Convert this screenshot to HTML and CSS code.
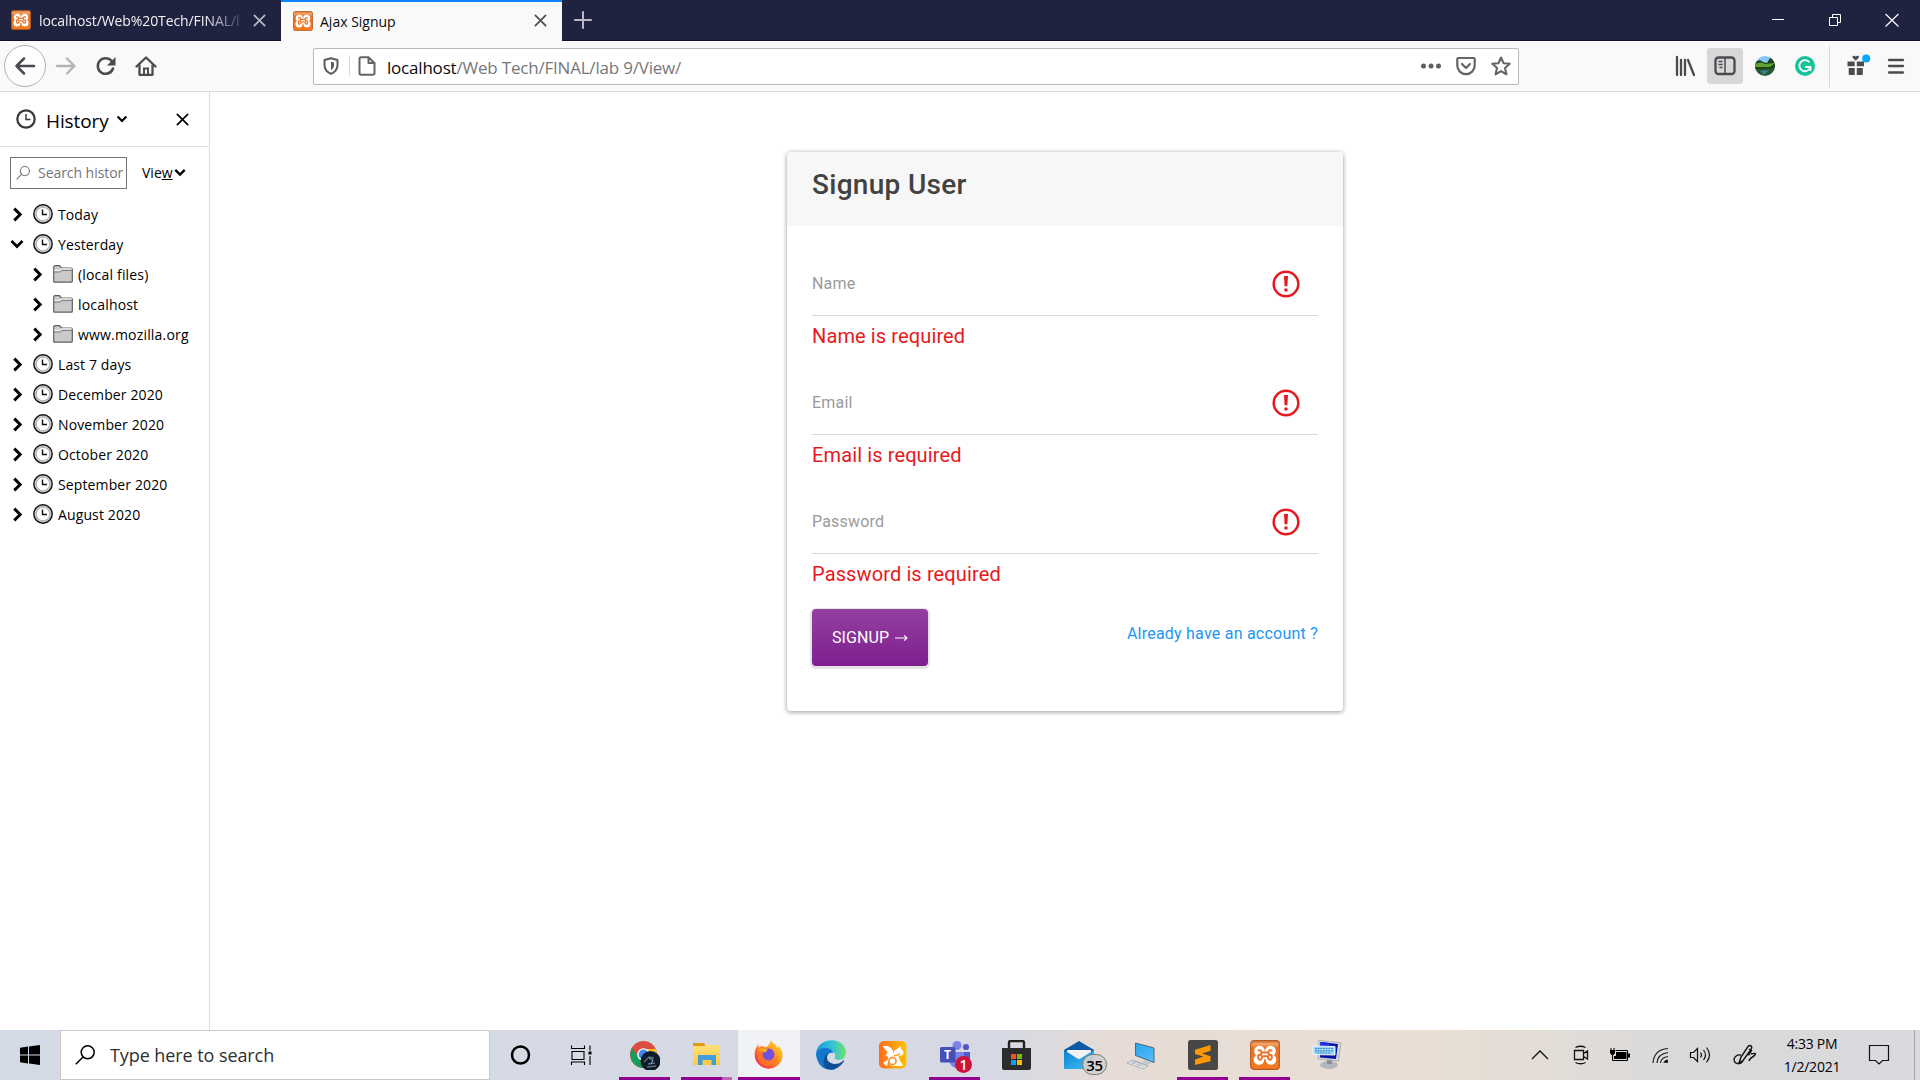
FILE: index.html
```html
<!DOCTYPE html>
<html lang="en">
<head>
<meta charset="utf-8">
<title>Ajax Signup</title>
<link rel="stylesheet" href="styles.css">
</head>
<body>
<svg class="defs" width="0" height="0" aria-hidden="true">
  <defs>
    <linearGradient id="g-orange" x1="0" y1="0" x2="0" y2="1"><stop offset="0" stop-color="#c9703a"/><stop offset=".12" stop-color="#f6a565"/><stop offset=".25" stop-color="#e9752a"/><stop offset="1" stop-color="#f47a20"/></linearGradient>
    <linearGradient id="g-edge" x1="0" y1="0" x2="1" y2="0"><stop offset="0" stop-color="#1a9be0"/><stop offset=".55" stop-color="#35c1d8"/><stop offset="1" stop-color="#6be36a"/></linearGradient>
    <linearGradient id="g-fire" x1="1" y1="0" x2="0" y2="1"><stop offset="0" stop-color="#ffe83a"/><stop offset=".4" stop-color="#ff9a1f"/><stop offset=".75" stop-color="#fb4a3c"/><stop offset="1" stop-color="#e3157c"/></linearGradient>
    <linearGradient id="g-uc" x1="0" y1="0" x2="1" y2="0"><stop offset="0" stop-color="#ff6a1a"/><stop offset="1" stop-color="#ffc400"/></linearGradient>
    <linearGradient id="g-folder" x1="0" y1="0" x2="0" y2="1"><stop offset="0" stop-color="#ffdf79"/><stop offset="1" stop-color="#fdc941"/></linearGradient>
    <linearGradient id="g-screen" x1="0" y1="0" x2="1" y2="1"><stop offset="0" stop-color="#29a4ee"/><stop offset="1" stop-color="#56bdfa"/></linearGradient>
    <linearGradient id="g-mail" x1="0" y1="0" x2="1" y2="1"><stop offset="0" stop-color="#0f7fd2"/><stop offset="1" stop-color="#3fc4f5"/></linearGradient>
  </defs>
  <symbol id="xampp" viewBox="0 0 30 30"><rect x=".7" y=".7" width="28.6" height="28.6" rx="3" fill="url(#g-orange)" stroke="#b65a20" stroke-width="1.2"/><g fill="#fff"><circle cx="9.500" cy="11" r="5.300"/><circle cx="20.500" cy="11" r="5.300"/><circle cx="9" cy="19.500" r="5.300"/><circle cx="21" cy="19.500" r="5.300"/><path d="M9 12h12v7H9z"/></g><g fill="none" stroke="#e9752a" stroke-width="2" stroke-linecap="round" stroke-linejoin="round"><path d="M8.500 10.500q3-1 3 2t-3 2.500M8.500 15q-1 4 1 4.700 2.500.3 2.500-3.500H18q0 3.800 2.500 3.500 2-.7 1-4.700M21.500 10.500q-3-1-3 2t3 2.500M13 12.500h4"/></g></symbol>
  <symbol id="x" viewBox="0 0 16 16"><path d="M2.500 2.500l11 11M13.500 2.500l-11 11" fill="none" stroke="currentColor" stroke-width="1.800" stroke-linecap="round"/></symbol>
  <symbol id="right" viewBox="0 0 10 14"><path d="M2 1.500 7.500 7 2 12.500" fill="none" stroke="currentColor" stroke-width="2.700"/></symbol>
  <symbol id="down" viewBox="0 0 14 10"><path d="M1.500 2 7 7.500 12.500 2" fill="none" stroke="currentColor" stroke-width="2.700"/></symbol>
  <symbol id="clock" viewBox="0 0 20 20"><circle cx="10" cy="10" r="9.200" fill="#c8c8c8" stroke="#111" stroke-width="1.400"/><circle cx="10" cy="10" r="6.700" fill="#fff" stroke="#a5a5a5" stroke-width=".8"/><path d="M9.500 5.500V10.500H14" fill="none" stroke="#111" stroke-width="1.400"/></symbol>
  <symbol id="folder" viewBox="0 0 20 18"><path d="M.7 16.300V2q0-1.300 1.300-1.300H6.500L8.500 3H18q1.300 0 1.300 1.300v12q0 .9-1 .9H1.700q-1 0-1-.9Z" fill="#cacaca" stroke="#606060" stroke-width="1.200"/><path d="M1.300 5.300h5.500L9 3.800h9.600" fill="none" stroke="#eee" stroke-width="1.200"/><path d="M1 7h6l2-1.500h10" fill="none" stroke="#777" stroke-width=".9"/></symbol>
  <symbol id="glass" viewBox="0 0 20 20"><circle cx="12.700" cy="7.300" r="6.500" fill="none" stroke="currentColor" stroke-width="1.500"/><path d="M8 12 .8 19.200" stroke="currentColor" stroke-width="1.500"/></symbol>
  <symbol id="warn" viewBox="0 0 28 28"><circle cx="14" cy="14" r="12.300" fill="none" stroke="#e61920" stroke-width="2.500"/><path d="M12 6h4l-.6 10.200h-2.800Z" fill="#e61920"/><circle cx="14" cy="20" r="1.800" fill="#e61920"/></symbol>
</svg>

<header class="tabs">
  <div class="tab tab-idle"><svg class="fav"><use href="#xampp"/></svg><span class="tab-title faded">localhost/Web%20Tech/FINAL/l</span><svg class="tab-x"><use href="#x"/></svg></div>
  <div class="tab tab-on"><svg class="fav"><use href="#xampp"/></svg><span class="tab-title">Ajax Signup</span><svg class="tab-x"><use href="#x"/></svg></div>
  <svg class="plus" viewBox="0 0 18 18"><path d="M9 1v16M1 9h16" stroke="#b9bac6" stroke-width="2" stroke-linecap="round"/></svg>
  <div class="window-buttons">
    <svg viewBox="0 0 57 40"><path d="M22 19.500h12" stroke="#fff" stroke-width="1"/></svg>
    <svg viewBox="0 0 57 40"><path d="M22.500 17.500h8v8h-8ZM25.500 17.500v-3h8v8h-3" fill="none" stroke="#fff"/></svg>
    <svg viewBox="0 0 57 40"><path d="m21.500 14 13 12.500M34.500 14l-13 12.500" stroke="#fff" stroke-width="1.200"/></svg>
  </div>
</header>

<nav class="toolbar">
  <div class="nav-buttons">
    <div class="back"><svg width="22" height="20" viewBox="0 0 22 20"><path d="M20 10H3M10 2.500 2.500 10 10 17.500" fill="none" stroke="#4a4a4f" stroke-width="2.500" stroke-linecap="round" stroke-linejoin="round"/></svg></div>
    <svg class="nav-ico" viewBox="0 0 22 20"><path d="M2 10h17M12 2.500 19.500 10 12 17.500" fill="none" stroke="#b4b4b6" stroke-width="2.300" stroke-linecap="round" stroke-linejoin="round"/></svg>
    <svg class="nav-ico" viewBox="0 0 22 20"><path d="M18 12.500A7.800 7.800 0 1 1 16.600 5" fill="none" stroke="#4a4a4f" stroke-width="2.500" stroke-linecap="round"/><path d="M20.500 1v8.500H12Z" fill="#4a4a4f"/></svg>
    <svg class="nav-ico" viewBox="0 0 22 20"><path d="M1.500 10.500 11 1.500l9.500 9M4.500 9.500v9.300h13V9.500" fill="none" stroke="#4a4a4f" stroke-width="2.300" stroke-linecap="round" stroke-linejoin="round"/><path d="M9 18.500v-6h4v6" fill="none" stroke="#4a4a4f" stroke-width="2"/></svg>
  </div>
  <div class="url">
    <svg class="shield" viewBox="0 0 16 18"><path d="M8 1.200 14.500 3v5q0 6-6.500 8.800Q1.500 14 1.500 8V3Z" fill="none" stroke="#5c5c60" stroke-width="2" stroke-linejoin="round"/><path d="M8 4.700 11 5.500v3q0 3-3 5Z" fill="#5c5c60"/></svg>
    <svg class="page-ico" viewBox="0 0 18 20"><path d="M3 1.200h7.500L16.500 7v10q0 1.800-1.800 1.800H3.300Q1.500 18.800 1.500 17V3q0-1.800 1.500-1.800ZM10.500 1.500V7h6" fill="none" stroke="#646468" stroke-width="2" stroke-linejoin="round"/></svg>
    <span class="address"><b>localhost</b>/Web Tech/FINAL/lab 9/View/</span>
    <svg class="url-ico" viewBox="0 0 20 20"><g fill="#5f5f63"><circle cx="2.500" cy="10" r="2.500"/><circle cx="10" cy="10" r="2.500"/><circle cx="17.500" cy="10" r="2.500"/></g></svg>
    <svg class="url-ico" viewBox="0 0 20 20"><path d="M2.500 2h15q1.200 0 1.200 1.200V9.500a8.700 8.700 0 0 1-17.400 0V3.200Q1.300 2 2.500 2ZM6 8l4 4 4-4" fill="none" stroke="#646468" stroke-width="2.200" stroke-linecap="round" stroke-linejoin="round"/></svg>
    <svg class="url-ico" viewBox="0 0 20 20"><path d="m10 1.500 2.500 5.700 6.200.6-4.700 4.200 1.400 6.300L10 15.200l-5.400 3.100L6 12 1.300 7.800l6.200-.6Z" fill="none" stroke="#646468" stroke-width="2.100" stroke-linejoin="round"/></svg>
  </div>
  <div class="tools">
    <svg class="tool" viewBox="0 0 36 36"><path d="M10 9v18M14 12v15M18 12v15M21 12l6 15" fill="none" stroke="#4a4a4f" stroke-width="2.300" stroke-linecap="round"/></svg>
    <svg class="tool pressed" viewBox="0 0 36 36"><rect x="8.500" y="9.500" width="19" height="16.500" rx="3" fill="none" stroke="#4a4a4f" stroke-width="2.300"/><path d="M18 10v16M11.500 13.500h4M11.500 16.500h4M12.500 19.500h3" stroke="#4a4a4f" stroke-width="1.500"/></svg>
    <svg class="tool avatar" viewBox="0 0 36 36"><clipPath id="av"><circle cx="18" cy="18" r="10"/></clipPath><g clip-path="url(#av)"><path fill="#82c8f5" d="M8 8h20v10H8z"/><path fill="#245b2b" d="M8 16h20v12H8z"/><path fill="#1e4316" d="M8 15q4-5 8-1l4 1 3-5 6 1v8l-8 2H8z"/><path fill="#62a02e" d="M8 16q6-3 10 0l10-1-5 4H8z"/><path fill="#427a9e" d="m13 23 9-1-5 5z"/></g></svg>
    <svg class="tool" viewBox="0 0 36 36"><circle cx="18" cy="18" r="10" fill="#15c39a"/><path d="M22.500 14.300A5.600 5.600 0 1 0 23.300 19.500M18 19h5.500v4" fill="none" stroke="#fff" stroke-width="1.800"/></svg>
    <i class="tool-sep"></i>
    <svg class="tool gift" viewBox="0 0 36 36"><path d="M9.500 13.500h7.200v4.800H9.500zM18.800 13.500H26v4.800h-7.200zM10.700 20h6v7h-5q-1 0-1-1zM18.800 20h6v6q0 1-1 1h-5z" fill="#4a4a4f"/><path d="m17.700 12.800-3-3q-.8-1.500.7-2 1.300-.3 2.300 1 1-1.300 2.300-1 1.500.5.700 2Z" fill="#4a4a4f"/><circle cx="28.200" cy="10.500" r="4" fill="#00a9ff"/></svg>
    <svg class="tool" viewBox="0 0 36 36"><path d="M11 12h14M11 18h14M11 24.500h14" stroke="#4a4a4f" stroke-width="2.300" stroke-linecap="round"/></svg>
  </div>
</nav>

<main class="window">
  <aside class="sidebar">
    <div class="side-head">
      <svg width="20" height="20" viewBox="0 0 20 20"><circle cx="10" cy="10" r="8.700" fill="none" stroke="#38383d" stroke-width="2.200"/><path d="M10 5v5.500h4.500" fill="none" stroke="#38383d" stroke-width="1.400"/></svg>
      <span class="side-title">History</span>
      <svg class="side-arrow" width="12" height="8"><use href="#down"/></svg>
      <svg class="side-close" width="15" height="15"><use href="#x"/></svg>
    </div>
    <div class="side-search">
      <div class="field"><svg width="14" height="14"><use href="#glass"/></svg><span>Search histor</span></div>
      <span class="view">Vie<u>w</u></span><svg width="12" height="9"><use href="#down"/></svg>
    </div>
    <ul class="tree">
      <li><svg class="chev"><use href="#right"/></svg><svg class="clk"><use href="#clock"/></svg>Today</li>
      <li><svg class="chev open"><use href="#down"/></svg><svg class="clk"><use href="#clock"/></svg>Yesterday</li>
      <li class="sub"><svg class="chev"><use href="#right"/></svg><svg class="fld"><use href="#folder"/></svg>(local files)</li>
      <li class="sub"><svg class="chev"><use href="#right"/></svg><svg class="fld"><use href="#folder"/></svg>localhost</li>
      <li class="sub"><svg class="chev"><use href="#right"/></svg><svg class="fld"><use href="#folder"/></svg>www.mozilla.org</li>
      <li><svg class="chev"><use href="#right"/></svg><svg class="clk"><use href="#clock"/></svg>Last 7 days</li>
      <li><svg class="chev"><use href="#right"/></svg><svg class="clk"><use href="#clock"/></svg>December 2020</li>
      <li><svg class="chev"><use href="#right"/></svg><svg class="clk"><use href="#clock"/></svg>November 2020</li>
      <li><svg class="chev"><use href="#right"/></svg><svg class="clk"><use href="#clock"/></svg>October 2020</li>
      <li><svg class="chev"><use href="#right"/></svg><svg class="clk"><use href="#clock"/></svg>September 2020</li>
      <li><svg class="chev"><use href="#right"/></svg><svg class="clk"><use href="#clock"/></svg>August 2020</li>
    </ul>
  </aside>

  <section class="page">
    <form class="card">
      <h1 class="card-head">Signup User</h1>
      <div class="card-body">
        <div class="row"><label>Name</label><svg><use href="#warn"/></svg></div>
        <p class="error">Name is required</p>
        <div class="row"><label>Email</label><svg><use href="#warn"/></svg></div>
        <p class="error">Email is required</p>
        <div class="row"><label>Password</label><svg><use href="#warn"/></svg></div>
        <p class="error">Password is required</p>
        <div class="actions">
          <button type="button" class="signup"><span>SIGNUP</span><svg width="13" height="8" viewBox="0 0 13 8"><path d="M0 4h12M9 1.300 12 4 9 6.700" fill="none" stroke="#fff" stroke-width="1.100"/></svg></button>
          <a class="login">Already have an account ?</a>
        </div>
      </div>
    </form>
  </section>
</main>

<footer class="taskbar">
  <div class="start"><svg width="20" height="20" viewBox="0 0 20 20"><path d="M0 2.700 8 1.600V9.500H0ZM9 1.400 20 0V9.500H9ZM0 10.500h8v8L0 17.300ZM9 10.500h11V20L9 18.600Z"/></svg></div>
  <div class="task-search"><svg width="20" height="20"><use href="#glass"/></svg><span>Type here to search</span></div>
  <div class="apps">
    <div class="app"><svg viewBox="0 0 30 30"><circle cx="14.500" cy="15" r="8.500" fill="none" stroke="#000" stroke-width="2.500"/></svg></div>
    <div class="app"><svg viewBox="0 0 30 30"><path d="M3.500 5.500v3h13v-3M4 11.500h12v8H4ZM3.500 25v-3h13v3M22 5.500v5M22 16v9" fill="none" stroke="#000" stroke-width="1.100"/><path d="M20.500 11.500h3v3h-3z"/></svg></div>
    <div class="app running"><svg viewBox="0 0 30 30"><circle cx="13.500" cy="14.500" r="13.500" fill="#dc4e41"/><path d="M2 8 10 19l3 9A13.500 13.500 0 0 1 2 8Z" fill="#14a05c"/><path d="M14 9h12q2 7-2 13l-10 2Z" fill="#f9bf2c"/><circle cx="13.500" cy="14.500" r="6.300" fill="#fff"/><circle cx="13.500" cy="14.500" r="4.900" fill="#4186f3"/><circle cx="20.500" cy="21" r="10" fill="#0d1c2b"/><path d="m14 22 5-5 5 1M18 24l7-1M17 27l9-1" fill="none" stroke="#5f7080" stroke-width="1.300"/><path d="m19 18 4 2-2 4" fill="none" stroke="#a3b0ba" stroke-width="1"/></svg></div>
    <div class="app running stacked"><svg viewBox="0 0 30 30"><path d="M1 3h11l2 3H1z" fill="#dd9c0f"/><path d="M1 6h11l2-1h14v20H1z" fill="url(#g-folder)"/><path d="M6 15h18v10h-4.500v-5h-9v5H6z" fill="#3f9dde"/></svg></div>
    <div class="app running active"><svg viewBox="0 0 30 30"><path d="M17 0q1 3 5 5l1 3 2-2q4 5 3.500 11A14 14 0 0 1 .7 15Q.5 9 4.500 4v4l3-2q3 2 5 1l3-3Z" fill="url(#g-fire)"/><path d="M3 9q5-5 9-1l-4 3 2 4q3 7 10 4l4-3q-1 9-10 10Q2 26 3 9Z" fill="#ff7a22" opacity=".8"/><circle cx="14.500" cy="14.500" r="6" fill="#7550dc"/><path d="M4 10q4-3 7-1l3 .5-3 3-3-1Z" fill="#ffac21"/></svg></div>
    <div class="app"><svg viewBox="0 0 30 30"><path d="M0 14C1-4 29-4 30 12q0 7-7 8-5-.5-4-3 1-4-3-6-8-3-16 3Z" fill="url(#g-edge)"/><path d="M0 15q0-6 8-7 8 0 9.500 5-6-1-6.500 5 0 6 8 11.400Q3 32 0 15Z" fill="#1576cf"/><path d="M12 12q-4 10 6 12 6 0 9.500-3.500 1-.3.500 1-8 11-18 7Q4 22 12 12Z" fill="#104f91"/></svg></div>
    <div class="app"><svg viewBox="0 0 30 30"><rect x="1" y="1" width="27.500" height="27.500" rx="5" fill="url(#g-uc)"/><path d="M4.500 6q7-1 10 4 2 5-1 8-5 5-4 8-4-1-4-4 4-1 5-4-1-2-3-3 2-1 2-3-3-3-5-6Z" fill="#fff"/><path d="M15 15q0-5 4-6l4-3v3q3 2 2.500 5-2 2-5 2l2 6 2 2v2H14l-3-2q-1-6 4-9Z" fill="#fff"/><circle cx="14.500" cy="21" r="3.600" fill="none" stroke="#ff861a" stroke-width="1.500"/><path d="M16 15.500q4 .5 6-2" fill="none" stroke="#ff9b10" stroke-width="1.300"/></svg></div>
    <div class="app running teams"><svg viewBox="0 0 30 30"><circle cx="17" cy="5.500" r="4.500" fill="#7b83eb"/><circle cx="26" cy="7" r="3.100" fill="#5059c9"/><path d="M21 12h9v9q-3 4-9 2Z" fill="#5059c9"/><path d="M11 12h13v10q-2 6-8 6-5-1-7-7Z" fill="#7b83eb"/><rect x="0" y="7" width="15.500" height="15.500" rx="1.500" fill="#464eb8"/></svg><span class="team-letter">T</span><span class="badge">1</span></div>
    <div class="app"><svg viewBox="0 0 30 30"><path d="M7 9V2.500Q7 1 8.500 1h12Q22 1 22 2.500V9" fill="none" stroke="#222" stroke-width="2.400"/><path d="M0 8h29v20q0 2-2 2H2q-2 0-2-2Z" fill="#2c2c2c"/><path fill="#f25022" d="M9 14h5v5H9z"/><path fill="#7fba00" d="M15 14h5v5h-5z"/><path fill="#00a4ef" d="M9 20h5v5H9z"/><path fill="#ffb900" d="M15 20h5v5h-5z"/></svg></div>
    <div class="app mail"><svg viewBox="0 0 30 30"><path d="M0 10 15 1l15 9v3H0Z" fill="#0d59a4"/><path d="M3 10h24v8H3z" fill="#f2f2f2"/><path d="M0 10 15 19.500 30 10v19H0Z" fill="url(#g-mail)"/></svg><span class="badge">35</span></div>
    <div class="app"><svg viewBox="0 0 30 30"><path d="M9.500 3 28 8v14.500L9.500 15.500Z" fill="url(#g-screen)" stroke="#456a82"/><path d="m19 20 7 3-5 2-6-3Z" fill="#c2cbd0"/><path d="m1 23 5-3 16 5.500-5 3.500Z" fill="#e9edf0" stroke="#8e9ba5" stroke-width=".7"/><path d="m4 22 14 5M6 21l14 4.700M5 24.500l5-3.300M11 26.500l4-2.700" stroke="#99a5ad" stroke-width=".6"/></svg></div>
    <div class="app running"><svg viewBox="0 0 30 30"><rect width="30" height="30" rx="2.500" fill="#474747"/><path d="M22.500 5v5.700L14 13.500l8.500 2.700v5L7 25v-5.500l8.500-3L7 14V9.800Z" fill="#ff9800"/></svg></div>
    <div class="app running"><svg viewBox="0 0 30 30"><use href="#xampp"/></svg></div>
    <div class="app"><svg viewBox="0 0 30 30"><ellipse cx="17" cy="25" rx="9" ry="4" fill="#b4b8bc"/><path d="M15 18h5v6h-5z" fill="#8a8f94"/><path d="m7 .5 22 2.200L26.500 21 6 19Z" fill="#d5d9dd" stroke="#8c9298" stroke-width=".6"/><path d="m8.500 2 17.500 2-2 15L8 17.500Z" fill="#0a12a8"/><path d="m8.500 2 9 1v3H8Z" fill="#1b2fe0"/><path d="M1 6l22 .5V15L1 14.500Z" fill="#9ed5f7" stroke="#eaf6fd"/><path d="M3 8.500h18M3 10.800h18M5 13h14" stroke="#2e82c4" stroke-width="1.200" stroke-dasharray="1.700 1"/></svg></div>
  </div>
  <div class="tray">
    <svg viewBox="0 0 40 30"><path d="m12 19 8-8 8 8" fill="none" stroke="#111" stroke-width="1.300"/></svg>
    <svg viewBox="0 0 40 30"><path d="M14.500 10.500h9v9h-9ZM23.500 13.500l4-2.500v8l-4-2.500M15.500 7.500q5-2.500 10 0M15.500 22.500q5 2.500 10 0" fill="none" stroke="#111" stroke-width="1.300"/></svg>
    <svg viewBox="0 0 40 30"><path d="M15.500 10.500h12v10h-12" fill="none" stroke="#000"/><path d="M16 12h10.500v7H14v-3h2zM28 13.500h2v4h-2zM10 10h5v3l-1.500 2h-2L10 13z"/><path d="M11 8v3M14 8v3M12.500 15v5.500h4" fill="none" stroke="#000"/></svg>
    <svg viewBox="0 0 40 30"><g fill="none" stroke="#222" stroke-width="1.200"><path d="M13 23Q14 9.500 28 8.500M17 23q.5-9 11-10.500M20.500 23q.5-5.500 7.500-6.500M24 23q.5-2.500 4-3"/></g><circle cx="26.500" cy="21.500" r="1.500"/></svg>
    <svg viewBox="0 0 40 30"><path d="M10.500 12.500h3l4-4v13l-4-4h-3ZM20.500 12.500q2 2.500 0 5M23.500 10q4 5 0 10M26.500 7.500q6 7.500 0 15" fill="none" stroke="#111" stroke-width="1.200"/></svg>
    <svg class="pen" viewBox="0 0 50 30"><path d="M19 23 21 17 28 6.500q2-2 3.500 0 .8 1-.5 3L23 20.500ZM29 9l2.500 1.500-3 5M21 15q-5-1-7 4 0 6 7 4l2-2M31 14q7-2 3 2-4 2-5 5" fill="none" stroke="#111" stroke-width="1.400"/></svg>
    <div class="time"><span>4:33 PM</span><span>1/2/2021</span></div>
    <svg class="note" viewBox="0 0 50 30"><path d="M15.500 5.500h19v15h-6l-3.500 3.500-3.500-3.500h-6Z" fill="none" stroke="#111" stroke-width="1.200"/></svg>
    <i class="desk"></i>
  </div>
</footer>
</body>
</html>
```
FILE: styles.css
```css
* { box-sizing: border-box; }
html, body { height: 100%; }
body {
  margin: 0;
  display: flex;
  flex-direction: column;
  overflow: hidden;
  background: #fff;
  color: #000;
  font-family: "Open Sans", "Noto Sans", sans-serif;
  font-size: 14px;
}
svg { display: block; flex: none; }
.defs { position: absolute; }

/* tab strip */
.tabs { display: flex; align-items: center; height: 41px; flex: none; background: #202340; border-bottom: 1px solid #0f1130; }
.tab { display: flex; align-items: center; width: 281px; height: 41px; padding: 0 14px 0 11px; flex: none; }
.tab-idle { color: #f0f0f4; }
.tab-on { height: 42px; padding-left: 12px; background: #f9f9fa; border-top: 3px solid #0a84ff; color: #0c0c0d; }
.tab-on .fav, .tab-on .tab-x { margin-top: -2px; }
.fav { width: 20px; height: 20px; margin-right: 7px; }
.tab-title { flex: 1; overflow: hidden; white-space: nowrap; letter-spacing: 0; margin-top: 1px; }
.tab-on .tab-title { margin-top: -1px; }
.faded { margin-left: 1px; letter-spacing: -.1px; mask-image: linear-gradient(to right, #000 80%, transparent 100%); }
.tab-x { width: 15px; height: 15px; margin-left: 5px; }
.tab-idle .tab-x { color: #b9bac6; }
.tab-on .tab-x { color: #4a4a4f; }
.plus { width: 18px; height: 18px; margin-left: 12px; }
.window-buttons { display: flex; margin-left: auto; margin-right: -1px; }
.window-buttons svg { width: 57px; height: 40px; }

/* toolbar */
.toolbar { display: flex; align-items: center; height: 51px; flex: none; background: #f9f9fa; border-bottom: 1px solid #dcdcde; }
.nav-buttons { display: flex; align-items: center; width: 313px; padding-left: 4px; }
.back { display: flex; align-items: center; justify-content: center; width: 42px; height: 42px; border: 1px solid #b1b1b3; border-radius: 50%; background: #fdfdfd; }
.nav-ico { width: 22px; height: 20px; margin-left: 9px; }
.nav-ico + .nav-ico { margin-left: 18px; }
.url { display: flex; align-items: center; width: 1206px; height: 37px; padding: 0 7px 0 9px; background: #fff; border: 1px solid #b8b8ba; border-radius: 2px; }
.shield { width: 16px; height: 18px; }
.page-ico { width: 18px; height: 20px; margin-left: 10px; padding-left: 8px; border-left: 1px solid #d9d9db; box-sizing: content-box; }
.address { flex: 1; margin: 2px 0 0 11px; color: #77777a; font-size: 17px; letter-spacing: -.2px; }
.address b { font-weight: 400; color: #0c0c0d; }
.url-ico { width: 20px; height: 20px; margin-left: 15px; }
.tools { display: flex; align-items: center; margin-left: auto; padding-right: 6px; }
.tool { width: 36px; height: 36px; margin-left: 4px; }
.pressed { background: #d7d7d8; border-radius: 3px; }
.tool-sep { width: 1px; height: 41px; margin-left: 6px; background: #d7d7d8; }
.gift { margin-left: 8px; }

/* sidebar */
.window { display: flex; flex: 1; min-height: 0; }
.sidebar { width: 210px; flex: none; border-right: 1px solid #dcdcde; }
.side-head { display: flex; align-items: center; height: 55px; padding: 0 19px 0 16px; border-bottom: 1px solid #dfdfe1; }
.side-title { margin: 3px 0 0 10px; font-size: 19px; letter-spacing: -.1px; }
.side-arrow { margin-left: 7px; }
.side-close { margin-left: auto; }
.side-search { display: flex; align-items: center; padding: 9px 0 0 10px; height: 42px; }
.field { display: flex; align-items: center; width: 117px; height: 32px; padding-left: 5px; border: 1px solid #757577; color: #757577; overflow: hidden; white-space: nowrap; }
.field span { margin-left: 8px; letter-spacing: -.05px; }
.view { margin-left: 15px; margin-right: 1px; }
.tree { margin: 10px 0 0; padding: 0; list-style: none; }
.tree li { display: flex; align-items: center; height: 30px; padding-left: 12px; white-space: nowrap; letter-spacing: .12px; }
.tree .sub { padding-left: 32px; letter-spacing: .18px; }
.chev { width: 11px; height: 15px; margin-right: 10px; }
.chev.open { width: 14px; height: 10px; margin: 0 9px 0 -2px; }
.clk { width: 20px; height: 20px; margin-right: 5px; }
.fld { width: 20px; height: 18px; margin-right: 5px; }

/* signup card */
.page { display: flex; flex: 1; justify-content: center; align-items: flex-start; padding-top: 60px; font-family: Roboto, sans-serif; }
.card { width: 556px; height: 559px; border-radius: 4px; overflow: hidden; background: #fff; box-shadow: 0 1px 5px rgba(0, 0, 0, .42); }
.card-head { height: 74px; margin: 0; padding: 16px 25px; background: #f7f7f7; color: #424242; font-size: 28px; line-height: 33px; font-weight: 500; letter-spacing: .3px; }
.card-body { padding: 26px 25px 0; }
.row { display: flex; align-items: center; justify-content: space-between; height: 64px; padding: 0 18px 0 0; border-bottom: 1px solid #dadada; }
.row svg { width: 28px; height: 28px; }
.row label { color: #9a9a9a; font-size: 16px; letter-spacing: .2px; }
.error { height: 55px; margin: 0; padding-top: 8px; color: #e61920; font-size: 20px; line-height: 24px; letter-spacing: .12px; }
.actions { display: flex; justify-content: space-between; align-items: flex-start; }
.signup { display: flex; align-items: center; justify-content: center; gap: 6px; width: 116px; height: 57px; padding: 0; border: 0; border-radius: 4px; background: linear-gradient(#933fa0, #7f1f90); box-shadow: 0 1px 1px 2px #e3e3e3; color: #fff; font: 400 16px Roboto, sans-serif; letter-spacing: .1px; }
.login { margin-top: 15px; color: #2196f3; font-size: 16px; line-height: 20px; letter-spacing: .23px; }

/* taskbar */
.taskbar { display: flex; align-items: stretch; height: 50px; flex: none; background: linear-gradient(to right, #d3dae6 0, #d6d9e4 52%, #e6dcd5 58%, #e9dfd5 74%, #e3ddd6 80%, #d9d9db 88%, #d9dadd 100%); }
.start { display: flex; align-items: center; justify-content: center; width: 60px; }
.task-search { display: flex; align-items: center; width: 430px; padding-left: 14px; border: 1px solid #c8c8c8; background: #fff; }
.task-search span { margin-left: 15px; color: #2f2f2f; font-size: 18px; letter-spacing: -.08px; }
.apps { display: flex; }
.app { position: relative; display: flex; align-items: center; justify-content: center; width: 62px; }
.app svg { width: 30px; height: 30px; }
.running::after { content: ""; position: absolute; left: 5px; bottom: 0; width: 51px; height: 3px; background: #920092; }
.stacked::after { background: linear-gradient(to right, #920092 41px, #c062b6 41px); }
.active { background: #f0f2f6; }
.active::after { left: 0; width: 62px; }
.badge { position: absolute; display: flex; align-items: center; justify-content: center; }
.team-letter { position: absolute; left: 20px; top: 17px; width: 10px; color: #fff; font-size: 12px; line-height: 15px; font-weight: 700; }
.teams .badge { left: 31px; top: 26px; width: 17px; height: 17px; border-radius: 50%; background: #cf1238; color: #fff; font-size: 14px; font-weight: 600; }
.mail .badge { left: 34px; top: 24px; width: 25px; height: 21px; border: 1px solid #777; border-radius: 11px; background: rgba(210, 208, 208, .9); font-size: 15px; font-weight: 600; letter-spacing: -.3px; }
.tray { display: flex; align-items: center; margin-left: auto; }
.tray svg { width: 40px; height: 30px; }
.tray .pen, .tray .note { width: 50px; }
.time { display: flex; flex-direction: column; align-items: center; width: 84px; font-size: 14px; line-height: 23px; letter-spacing: -.25px; padding-bottom: 1px; }
.desk { width: 16px; height: 50px; padding: 0; background: linear-gradient(to right, transparent 10px, #a5a5aa 10px, #a5a5aa 11px, transparent 11px); }
```
